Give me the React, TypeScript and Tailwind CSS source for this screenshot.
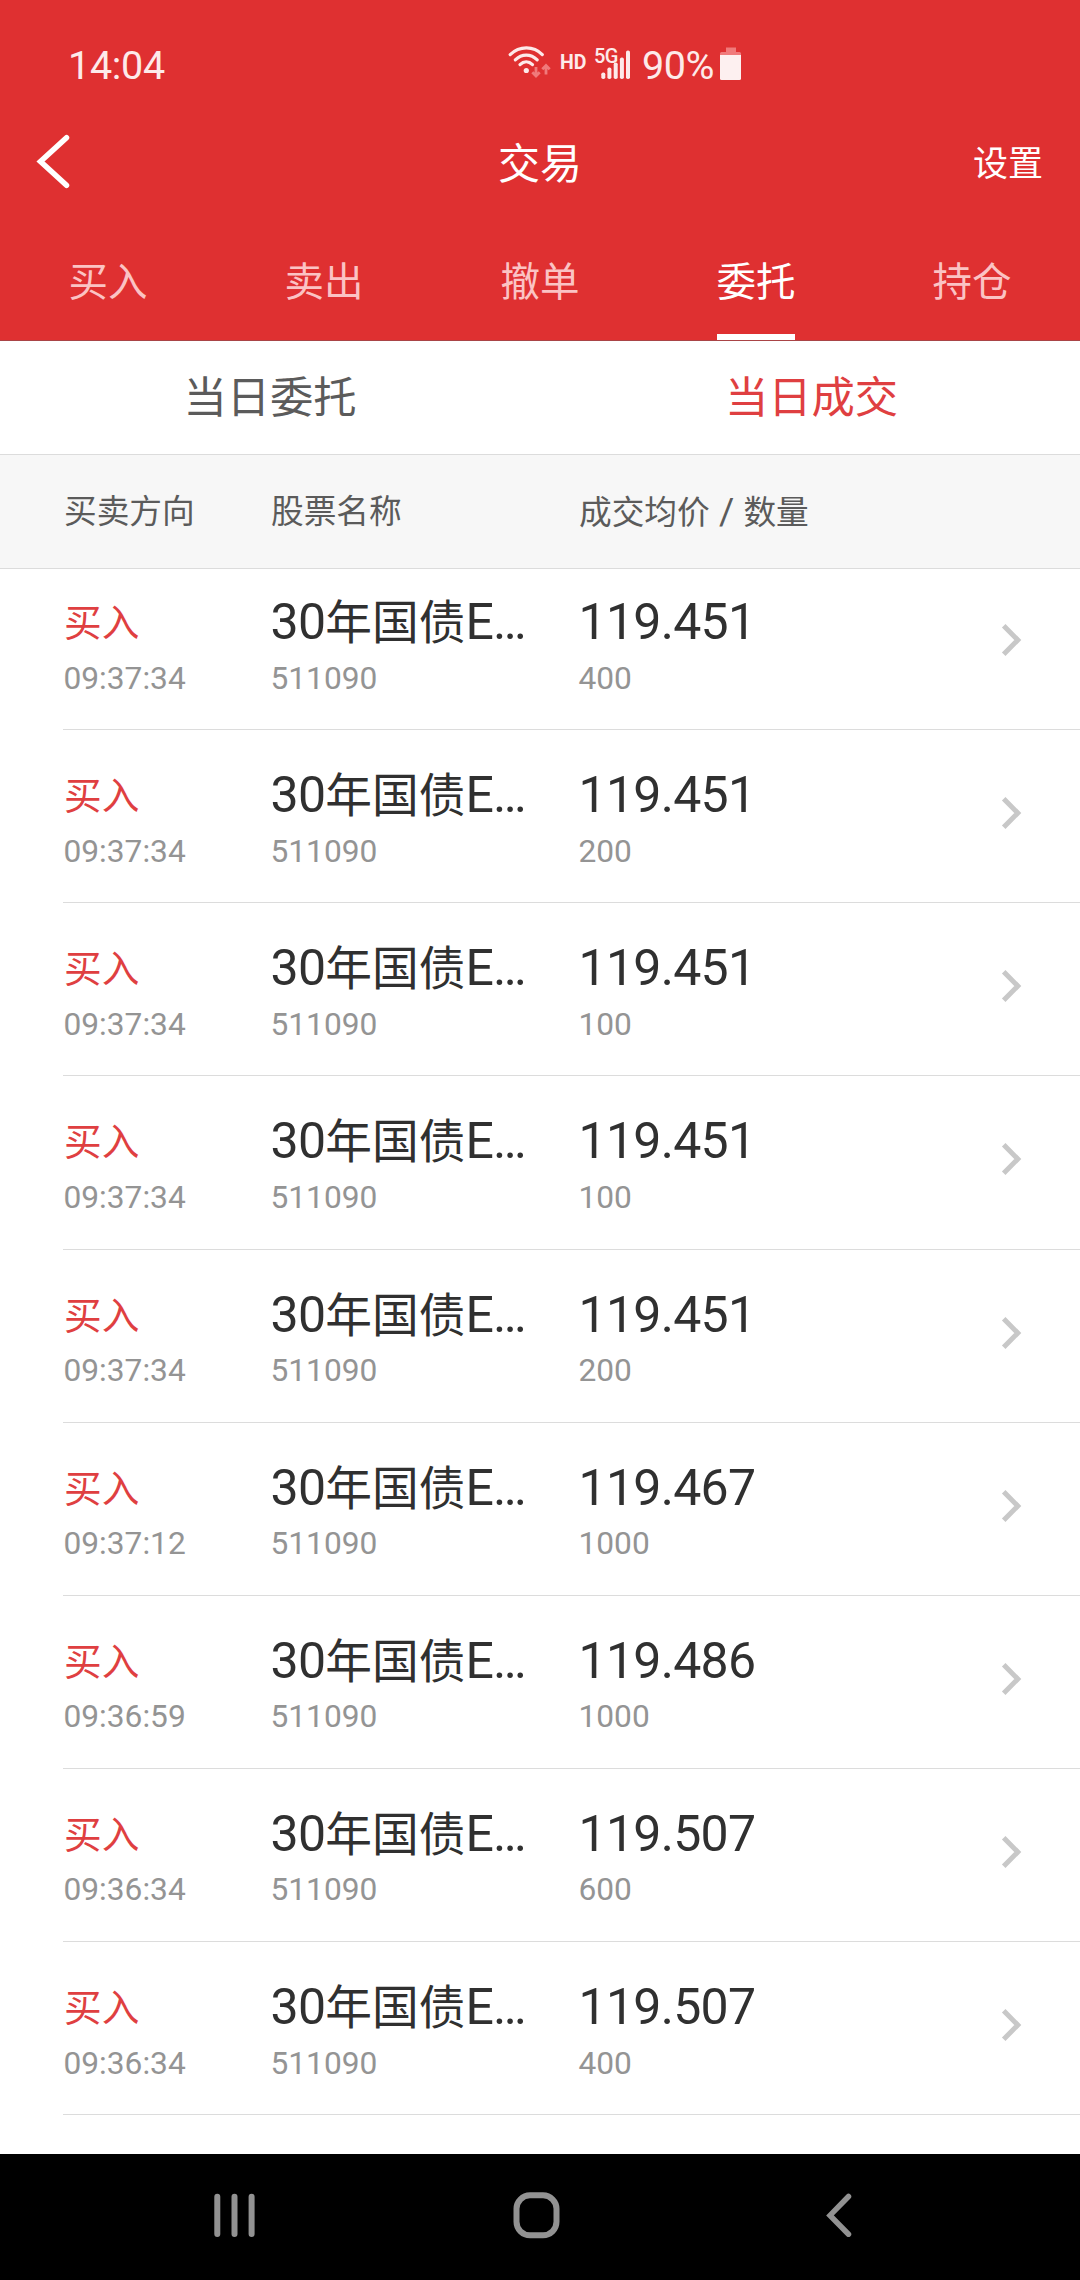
type Trade = { time: string; price: string; qty: string };

const trades: Trade[] = [
  { time: "09:37:34", price: "119.451", qty: "400" },
  { time: "09:37:34", price: "119.451", qty: "200" },
  { time: "09:37:34", price: "119.451", qty: "100" },
  { time: "09:37:34", price: "119.451", qty: "100" },
  { time: "09:37:34", price: "119.451", qty: "200" },
  { time: "09:37:12", price: "119.467", qty: "1000" },
  { time: "09:36:59", price: "119.486", qty: "1000" },
  { time: "09:36:34", price: "119.507", qty: "600" },
  { time: "09:36:34", price: "119.507", qty: "400" },
];

const tabs = ["买入", "卖出", "撤单", "委托", "持仓"];

function WifiIcon() {
  return (
    <svg width="44" height="34" viewBox="0 0 44 34" fill="none">
      <g stroke="#fdeaea" strokeWidth="3.200" strokeLinecap="round">
        <path d="M3.2 9.6C12.5 .6 26.500.6 35.300 9.600" />
        <path d="M8.300 14.800C14.800 8.500 23.700 8.500 30.200 14.800" />
        <path d="M13 19.600C16.800 15.900 21.700 15.900 25.500 19.600" />
      </g>
      <circle cx="19.300" cy="25.500" r="2.600" fill="#fdeaea" />
      <g stroke="#f07a7b" strokeWidth="2.800">
        <path d="M29 22V31M25.300 27.300L29 31L32.700 27.300" />
        <path d="M39 29.500V20.500M35.300 24.200L39 20.500L42.700 24.200" />
      </g>
    </svg>
  );
}

function SignalIcon() {
  return (
    <svg className="absolute bottom-0 right-0" width="30" height="30" viewBox="0 0 30 30" fill="#fdeaea">
      <rect x="1.300" y="22.500" width="4" height="6.500" rx="1.800" />
      <rect x="7.400" y="17.500" width="4" height="11.500" rx="1.800" />
      <rect x="13.700" y="12.500" width="4" height="16.500" rx="1.800" />
      <rect x="19.900" y="7.500" width="4" height="21.500" rx="1.800" />
      <rect x="26" y="0.500" width="4" height="28.500" rx="1.800" />
    </svg>
  );
}

function BatteryIcon() {
  return (
    <svg width="22" height="34" viewBox="0 0 22 34">
      <path d="M6 .5H16V5H19.500Q21 5 21 6.500V8H0V6.500Q0 5 1.500 5H6Z" fill="#f07a7b" />
      <path d="M0 8H21V31.500Q21 33 19.500 33H1.500Q0 33 0 31.500Z" fill="#fdf0f0" />
    </svg>
  );
}

function StatusBar() {
  return (
    <div className="flex h-[112px] items-start pl-[68px] pt-[42px] text-[39.500px] leading-[48px] text-[#fdeaea]">
      <span className="w-[439px] tracking-[-0.3px]">14:04</span>
      <span className="mt-[3px] w-[53px]">
        <WifiIcon />
      </span>
      <span className="mt-[9px] w-[34px] text-[19.500px] font-bold leading-[24px]">HD</span>
      <span className="relative h-[38px] w-[36px]">
        <span className="block pt-[3px] text-[20px] font-medium leading-[22px] tracking-[-0.5px]">5G</span>
        <SignalIcon />
      </span>
      <span className="ml-[12px] w-[78px] tracking-[-0.5px]">90%</span>
      <span className="mt-[5px]">
        <BatteryIcon />
      </span>
    </div>
  );
}

function TitleBar() {
  return (
    <div className="grid h-[100px] grid-cols-3 items-center text-white">
      <svg className="ml-[34px]" width="38" height="60" viewBox="0 0 38 60" fill="none">
        <path d="M32.500 5.700L6.500 29.500L32.500 53.300" stroke="#fff" strokeWidth="5.500" strokeLinecap="round" />
      </svg>
      <h1 className="pt-[6px] text-center text-[42px] font-normal leading-[60px]">交易</h1>
      <span className="pr-[37px] pt-[6px] text-right text-[35px] leading-[50px]">设置</span>
    </div>
  );
}

function TabBar() {
  return (
    <nav className="grid h-[129px] grid-cols-5 border-b border-[#a94446] text-[39.500px] text-[#fbc3c4]">
      {tabs.map((tab) => (
        <div key={tab} className="flex flex-col items-center justify-between pt-[41px]">
          <span className={tab === "委托" ? "leading-[60px] text-white" : "leading-[60px]"}>{tab}</span>
          {tab === "委托" && <span className="h-[6px] w-[78px] bg-white" />}
        </div>
      ))}
    </nav>
  );
}

function TradeRow({ time, price, qty }: Trade) {
  return (
    <div className="ml-[63px] flex h-[173.125px] border-b border-[#dcdcdc] text-[31.700px] leading-[38px] text-[#949494]">
      <div className="w-[207.500px] pt-[39px]">
        <div className="h-[63.500px] pl-px text-[37.700px] leading-[54px] text-[#df3f41]">买入</div>
        <div className="pl-[0.500px]">{time}</div>
      </div>
      <div className="w-[308px] pt-[35px]">
        <div className="h-[67.500px] whitespace-nowrap text-[50px] leading-[61px] tracking-[-0.700px] text-[#303030]">
          30<span className="text-[46.700px] tracking-normal">年国债</span>E…
        </div>
        <div>511090</div>
      </div>
      <div className="grow pt-[35px]">
        <div className="h-[67.500px] text-[50px] leading-[61px] tracking-[-0.700px] text-[#303030]">{price}</div>
        <div>{qty}</div>
      </div>
      <svg className="mr-[57.500px] mt-[65px]" width="22" height="36" viewBox="0 0 22 36" fill="none">
        <path d="M2.700 3.700L16.800 18L2.700 32.300" stroke="#c8c8c8" strokeWidth="5" />
      </svg>
    </div>
  );
}

function NavigationBar() {
  return (
    <div className="flex h-[126px] items-start bg-black pt-[37px] pl-[213px]">
      <svg width="44" height="50" viewBox="0 0 44 50" stroke="#929292" strokeWidth="6" strokeLinecap="round">
        <path d="M4.300 5.800V43M21.500 5.800V43M38.600 5.800V43" />
      </svg>
      <svg className="ml-[255px]" width="50" height="50" viewBox="0 0 50 50" fill="none" stroke="#929292" strokeWidth="6">
        <rect x="4.500" y="4.300" width="40" height="40" rx="13.500" />
      </svg>
      <svg className="ml-[262px]" width="30" height="50" viewBox="0 0 30 50" fill="none" stroke="#929292" strokeWidth="5.500" strokeLinecap="round">
        <path d="M24.500 5.500L6 24.400L24.500 43.200" />
      </svg>
    </div>
  );
}

export default function App() {
  return (
    <div className="flex h-[2280px] w-[1080px] flex-col overflow-hidden bg-white font-[Roboto,'Noto_Sans_CJK_SC',sans-serif]">
      <header className="h-[341px] bg-[#df3031]">
        <StatusBar />
        <TitleBar />
        <TabBar />
      </header>
      <div className="grid h-[114px] grid-cols-2 border-b border-[#dcdcdc] pt-[27px] text-center text-[43.300px] leading-[62px] text-[#5b5b5b]">
        <span>当日委托</span>
        <span className="pl-[3px] text-[#df3f41]">当日成交</span>
      </div>
      <div className="flex h-[114px] border-b border-[#dcdcdc] bg-[#f7f7f7] pl-[64px] pt-[33px] text-[32.700px] leading-[48px] text-[#5b5b5b]">
        <span className="w-[207px]">买卖方向</span>
        <span className="w-[308px]">股票名称</span>
        <span>
          成交均价<span className="text-[37px]"> / </span>数量
        </span>
      </div>
      <main className="h-[1585px] overflow-hidden">
        <div className="-mt-[12px]">
          {trades.map((t, i) => (
            <TradeRow key={i} {...t} />
          ))}
        </div>
      </main>
      <NavigationBar />
    </div>
  );
}
